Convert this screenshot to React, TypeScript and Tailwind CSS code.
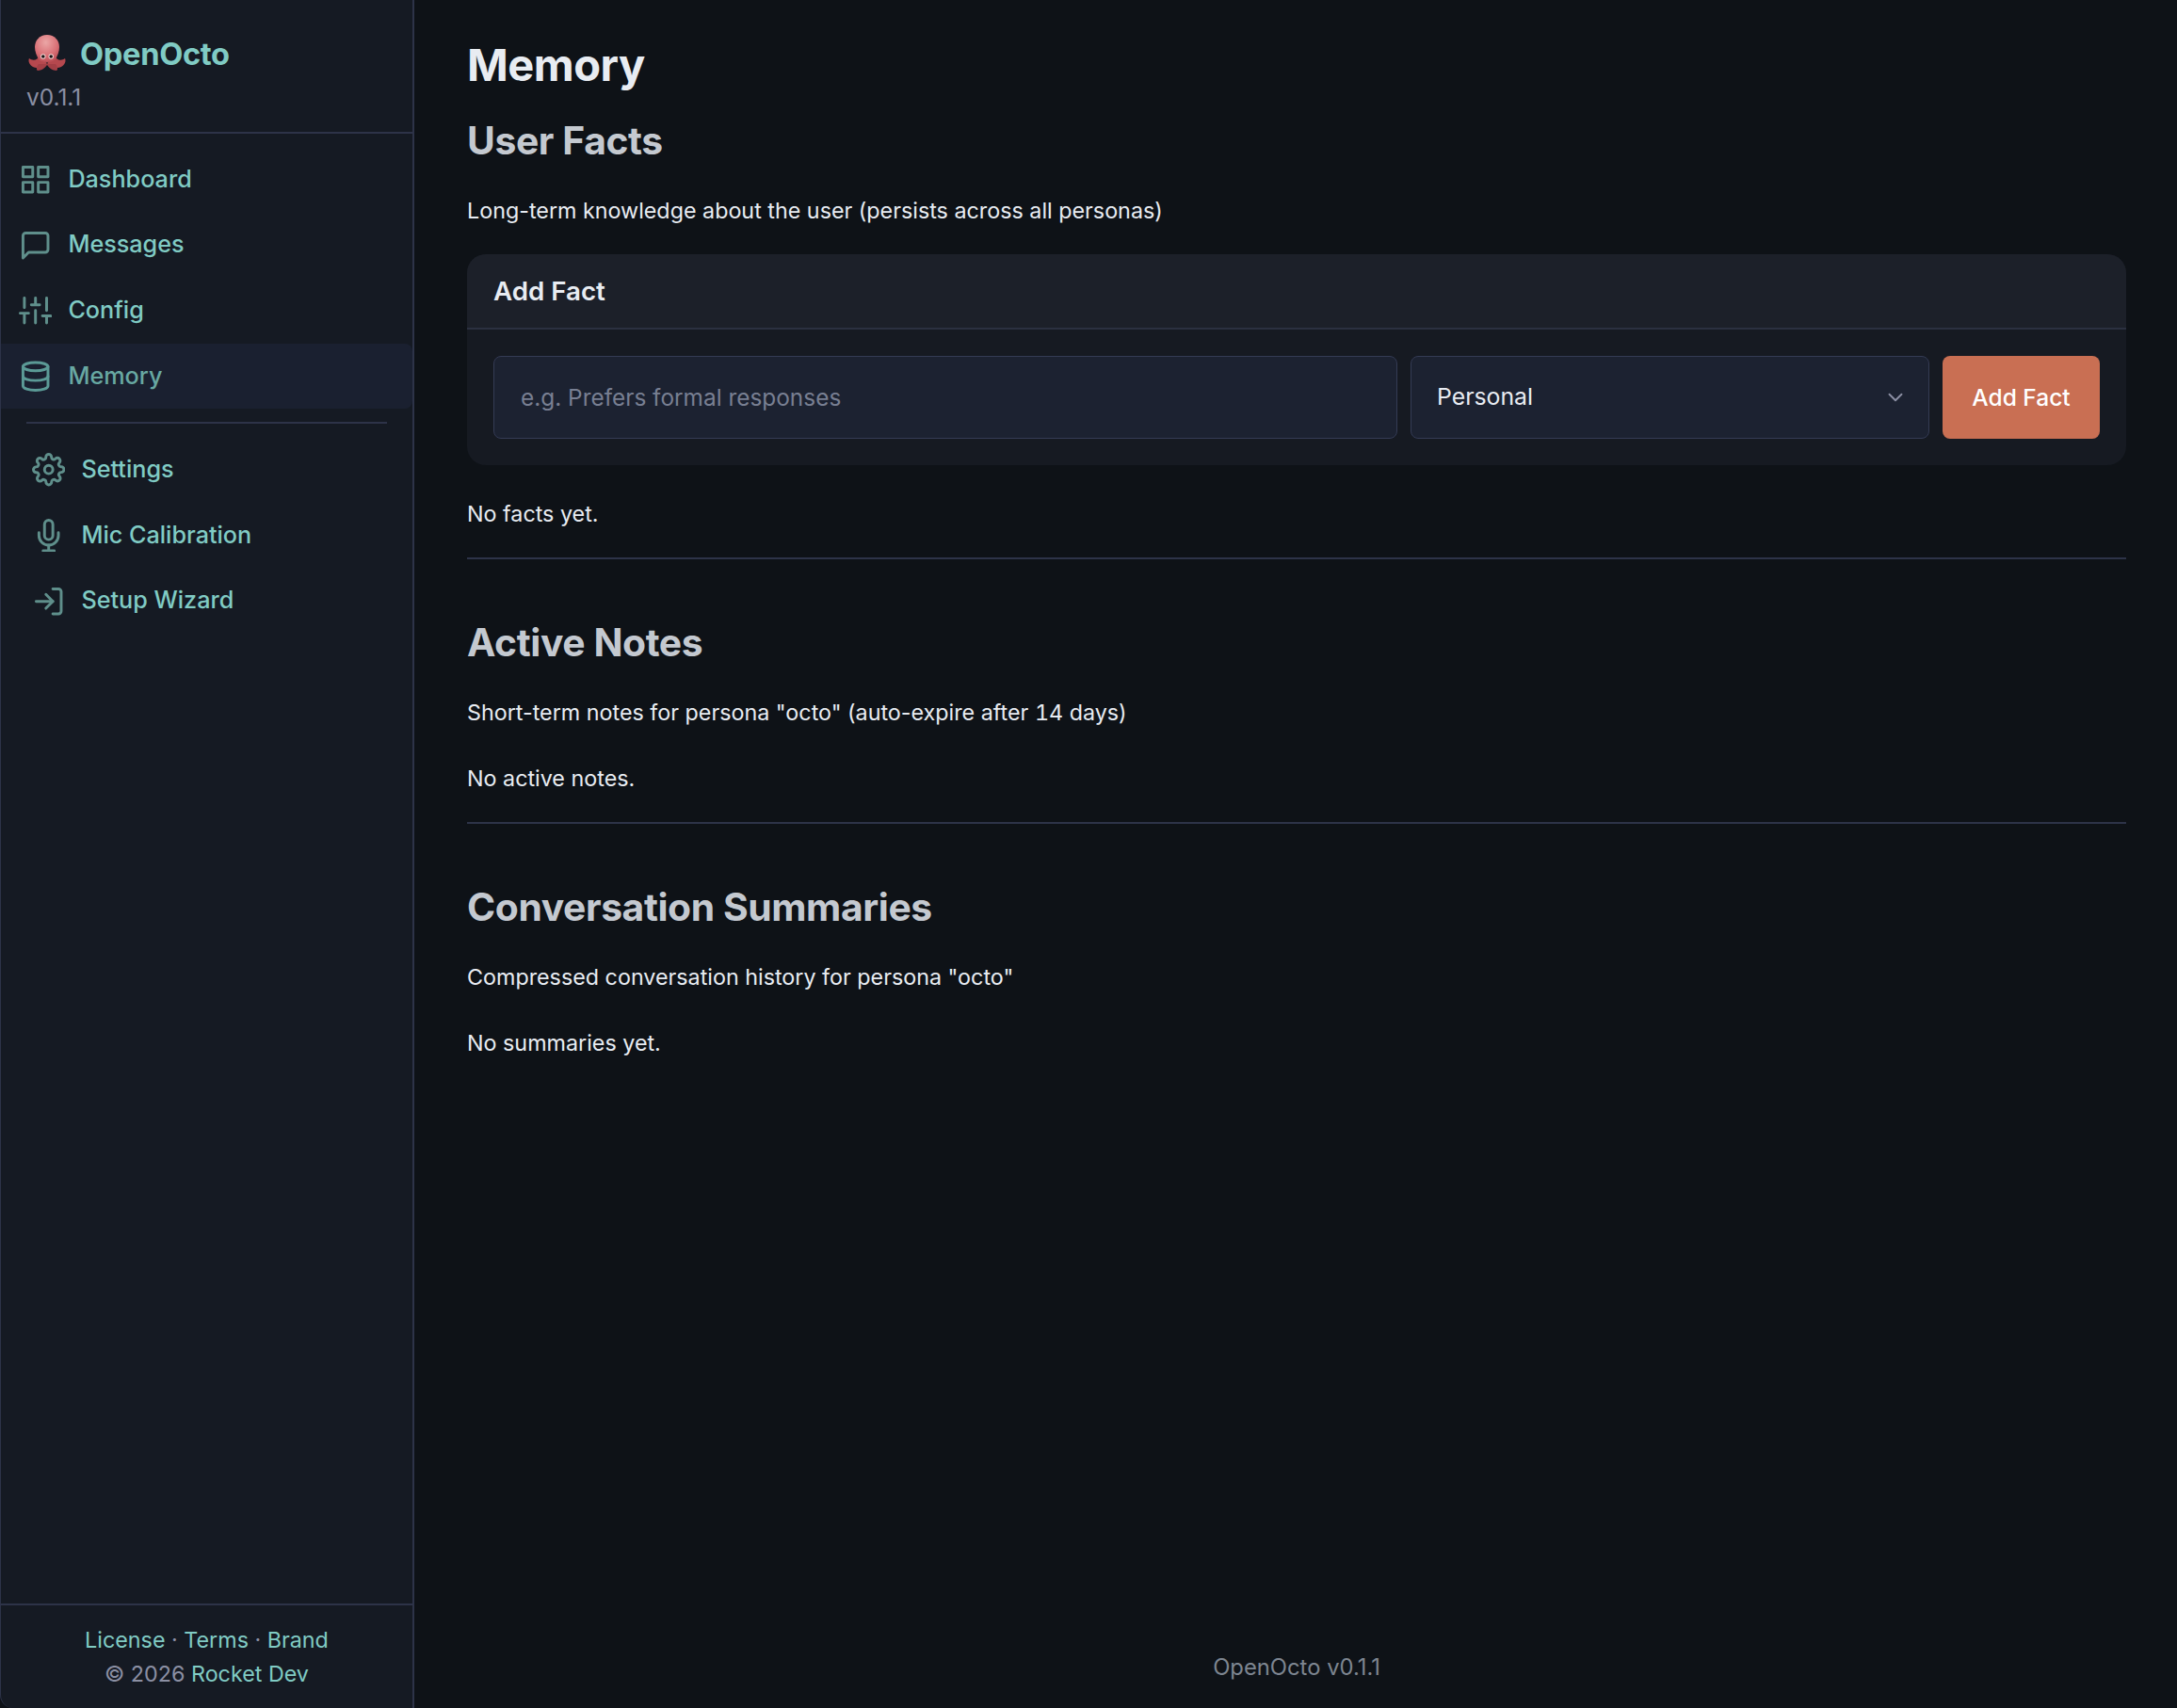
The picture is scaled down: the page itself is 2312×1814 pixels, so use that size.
import { LogIn, ChevronDown } from 'lucide-react'
import type { ReactNode } from 'react'

const iconCls = 'w-[35.4px] h-[35.4px]'

function Icon({ children }: { children: ReactNode }) {
  return (
    <svg viewBox="0 0 24 24" fill="none" stroke="currentColor" strokeWidth={2} strokeLinecap="round" strokeLinejoin="round" className={iconCls}>
      {children}
    </svg>
  )
}

function GridIcon() {
  return (
    <Icon>
      <rect x="3" y="3" width="7" height="7" />
      <rect x="14" y="3" width="7" height="7" />
      <rect x="14" y="14" width="7" height="7" />
      <rect x="3" y="14" width="7" height="7" />
    </Icon>
  )
}

function ChatIcon() {
  return (
    <Icon>
      <path d="M21 15a2 2 0 0 1-2 2H7l-4 4V5a2 2 0 0 1 2-2h14a2 2 0 0 1 2 2z" />
    </Icon>
  )
}

function SlidersIcon() {
  return (
    <Icon>
      <path d="M4 21v-7M4 10V3M12 21v-9M12 8V3M20 21v-5M20 12V3M1 14h6M9 8h6M17 16h6" />
    </Icon>
  )
}

function DatabaseIcon() {
  return (
    <Icon>
      <ellipse cx="12" cy="5" rx="9" ry="3" />
      <path d="M21 12c0 1.66-4 3-9 3s-9-1.34-9-3" />
      <path d="M3 5v14c0 1.66 4 3 9 3s9-1.34 9-3V5" />
    </Icon>
  )
}

function GearIcon() {
  return (
    <Icon>
      <circle cx="12" cy="12" r="3" />
      <path d="M19.4 15a1.65 1.65 0 0 0 .33 1.82l.06.06a2 2 0 0 1 0 2.83 2 2 0 0 1-2.83 0l-.06-.06a1.65 1.65 0 0 0-1.82-.33 1.65 1.65 0 0 0-1 1.51V21a2 2 0 0 1-2 2 2 2 0 0 1-2-2v-.09A1.65 1.65 0 0 0 9 19.4a1.65 1.65 0 0 0-1.82.33l-.06.06a2 2 0 0 1-2.83 0 2 2 0 0 1 0-2.83l.06-.06a1.65 1.65 0 0 0 .33-1.82 1.65 1.65 0 0 0-1.51-1H3a2 2 0 0 1-2-2 2 2 0 0 1 2-2h.09A1.65 1.65 0 0 0 4.6 9a1.65 1.65 0 0 0-.33-1.82l-.06-.06a2 2 0 0 1 0-2.83 2 2 0 0 1 2.83 0l.06.06a1.65 1.65 0 0 0 1.82.33H9a1.65 1.65 0 0 0 1-1.51V3a2 2 0 0 1 2-2 2 2 0 0 1 2 2v.09a1.65 1.65 0 0 0 1 1.51 1.65 1.65 0 0 0 1.82-.33l.06-.06a2 2 0 0 1 2.83 0 2 2 0 0 1 0 2.83l-.06.06a1.65 1.65 0 0 0-.33 1.82V9a1.65 1.65 0 0 0 1.51 1H21a2 2 0 0 1 2 2 2 2 0 0 1-2 2h-.09a1.65 1.65 0 0 0-1.51 1z" />
    </Icon>
  )
}

function MicIcon() {
  return (
    <Icon>
      <path d="M12 1a3 3 0 0 0-3 3v8a3 3 0 0 0 6 0V4a3 3 0 0 0-3-3z" />
      <path d="M19 10v2a7 7 0 0 1-14 0v-2" />
      <path d="M12 19v4M8 23h8" />
    </Icon>
  )
}

function OctopusLogo() {
  return (
    <svg viewBox="0 0 40 40" className="w-[40px] h-[40px] shrink-0 ml-[2px]">
      <defs>
        <radialGradient id="head" cx="45%" cy="28%" r="75%">
          <stop offset="0%" stopColor="#eba6a6" />
          <stop offset="65%" stopColor="#d86f75" />
          <stop offset="100%" stopColor="#b94c54" />
        </radialGradient>
      </defs>
      <path d="M12 22 C10 27 5 28 1 25 C-1 29 3 35 9 35 C14 36 18 33 20 30 Z" fill="#b5484e" />
      <path d="M28 22 C30 27 35 28 39 25 C41 29 37 35 31 35 C26 36 22 33 20 30 Z" fill="#b5484e" />
      <path d="M11 31 C9 33 8 37 10 38 C14 38 18 35 20 32 C22 35 26 38 30 38 C32 37 31 33 29 31 Z" fill="#a33f46" />
      <path d="M20 0 C28 0 33 6 33 13 C33 18 31 22 29 26 C26 30 14 30 11 26 C9 22 7 18 7 13 C7 6 12 0 20 0 Z" fill="url(#head)" />
      <circle cx="15.8" cy="23" r="2.7" fill="#f4d8d6" />
      <circle cx="24.2" cy="23" r="2.7" fill="#f4d8d6" />
      <circle cx="15.8" cy="23" r="1.8" fill="#1c1416" />
      <circle cx="24.2" cy="23" r="1.8" fill="#1c1416" />
    </svg>
  )
}

function NavItem({ icon, label, active, indent }: { icon: ReactNode; label: string; active?: boolean; indent?: boolean }) {
  return (
    <a
      className={`flex items-center gap-[17px] h-[69.6px] font-medium text-[25.2px] rounded-r-[8px] ${indent ? 'pl-[33px]' : 'pl-[19px]'} ${
        active ? 'bg-[#1a2030] text-[#68a8a2]' : 'text-[#80cbc4]'
      }`}
    >
      <span className={`shrink-0 ${active ? 'text-[#5b9a96]' : 'text-[#5f8f8b]'}`}>{icon}</span>
      {label}
    </a>
  )
}

function Section({ title, desc, empty, children, first }: { title: string; desc: ReactNode; empty: string; children?: ReactNode; first?: boolean }) {
  return (
    <section>
      <h2 className={`text-[40.8px] leading-[50px] font-bold tracking-[-0.4px] text-[#c4c9d0] ${first ? '' : 'mt-[63px]'}`}>{title}</h2>
      <p className="mt-[32px] text-[23.3px] leading-[36px] text-[#e8ecf2]">{desc}</p>
      {children}
      <p className="mt-[34px] text-[23.3px] leading-[36px] text-[#e8ecf2]">{empty}</p>
    </section>
  )
}

export default function App() {
  return (
    <div className="flex h-[1814px] bg-[#0e1217] font-['Inter',sans-serif] overflow-hidden">
      <aside className="flex flex-col w-[440px] shrink-0 bg-[#151a23] border-x-2 border-l-[1px] border-[#2d3348] rounded-bl-[14px]">
        <div className="h-[142px] border-b-2 border-[#2d3348] px-[27px] pt-[37px]">
          <div className="flex items-center gap-[15px] h-[40px]">
            <OctopusLogo />
            <span className="text-[32.6px] font-bold text-[#80cbc4] tracking-[-0.3px]">OpenOcto</span>
          </div>
          <div className="mt-[9px] text-[24.4px] leading-[34px] text-[#8b8fa3]">v0.1.1</div>
        </div>

        <nav className="flex-1 pt-[14px]">
          <NavItem icon={<GridIcon />} label="Dashboard" />
          <NavItem icon={<ChatIcon />} label="Messages" />
          <NavItem icon={<SlidersIcon />} label="Config" />
          <NavItem icon={<DatabaseIcon />} label="Memory" active />
          <div className="mx-[27px] mt-[14px] mb-[14px] h-[2px] bg-[#2d3348]" />
          <NavItem icon={<GearIcon />} label="Settings" indent />
          <NavItem icon={<MicIcon />} label="Mic Calibration" indent />
          <NavItem icon={<LogIn className={iconCls} />} label="Setup Wizard" indent />
        </nav>

        <div className="h-[111px] border-t-2 border-[#2d3348] pt-[19px] text-center text-[23.3px] leading-[36px] text-[#8b8fa3]">
          <div className="text-[#80cbc4]">
            License <span className="text-[#8b8fa3]">·</span> Terms <span className="text-[#8b8fa3]">·</span> Brand
          </div>
          <div>
            © 2026 <span className="text-[#80cbc4]">Rocket Dev</span>
          </div>
        </div>
      </aside>

      <main className="flex flex-col flex-1 pl-[56px] pr-[54px] pt-[40px]">
        <h1 className="text-[47px] leading-[58px] font-bold tracking-[-0.5px] text-[#e8ecf2] mb-[26px]">Memory</h1>

        <Section
          first
          title="User Facts"
          desc="Long-term knowledge about the user (persists across all personas)"
          empty="No facts yet."
        >
          <div className="mt-[28px] rounded-[20px] bg-[#161a22] overflow-hidden">
            <div className="h-[80px] flex items-center pt-[2px] px-[28px] bg-[#1c2029] border-b-2 border-[#2b3040] text-[27.7px] font-semibold text-[#e8ecf2]">
              Add Fact
            </div>
            <div className="flex gap-[14px] p-[28px]">
              <input
                placeholder="e.g. Prefers formal responses"
                className="flex-1 h-[88px] px-[28px] rounded-[8px] bg-[#1c2231] border border-[#343b54] text-[24.4px] text-[#e8ecf2] placeholder:text-[#787f92] outline-none"
              />
              <div className="relative w-[551px]">
                <select className="w-full h-[88px] px-[27px] rounded-[8px] bg-[#1c2231] border border-[#343b54] text-[24.8px] text-[#e8ecf2] appearance-none outline-none">
                  <option>Personal</option>
                </select>
                <ChevronDown strokeWidth={1.75} className="absolute right-[23px] top-[31px] w-[26px] h-[26px] text-[#8b8fa3] pointer-events-none" />
              </div>
              <button className="w-[167px] h-[88px] rounded-[8px] bg-[#c96f53] text-[24.5px] font-medium text-white">Add Fact</button>
            </div>
          </div>
        </Section>
        <div className="mt-[28px] h-[2px] bg-[#2d3348]" />

        <Section
          title="Active Notes"
          desc={
            <>
              Short-term notes for persona "octo" (auto-expire after <span className="tabular-nums">14</span> days)
            </>
          }
          empty="No active notes."
        />
        <div className="mt-[28px] h-[2px] bg-[#2d3348]" />

        <Section
          title="Conversation Summaries"
          desc={'Compressed conversation history for persona "octo"'}
          empty="No summaries yet."
        />

        <footer className="mt-auto pb-[26px] text-center text-[23.8px] leading-[34px] text-[#7d8590]">OpenOcto v0.1.1</footer>
      </main>
    </div>
  )
}
